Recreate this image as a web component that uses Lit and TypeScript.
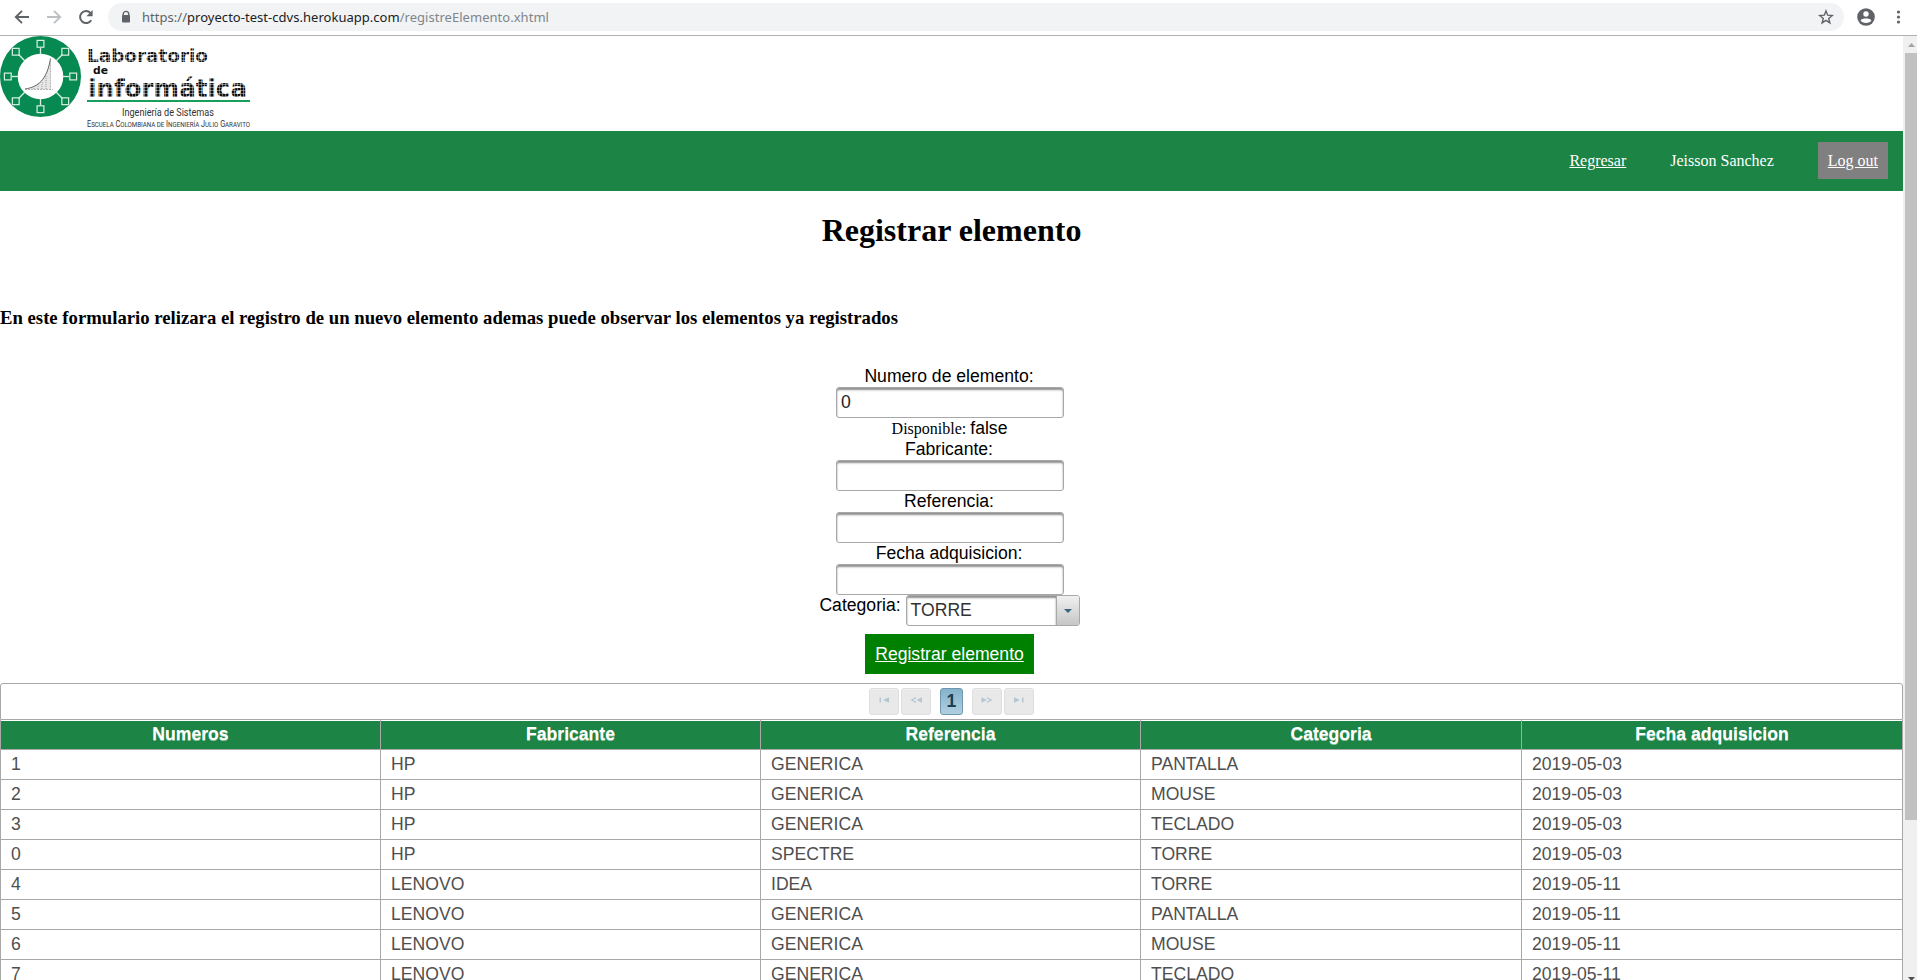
import { LitElement, html, css, svg } from "lit";
import { customElement, state } from "lit/decorators.js";

const COLUMNS = ["Numeros", "Fabricante", "Referencia", "Categoria", "Fecha adquisicion"];

const ROWS: string[][] = [
  ["1", "HP", "GENERICA", "PANTALLA", "2019-05-03"],
  ["2", "HP", "GENERICA", "MOUSE", "2019-05-03"],
  ["3", "HP", "GENERICA", "TECLADO", "2019-05-03"],
  ["0", "HP", "SPECTRE", "TORRE", "2019-05-03"],
  ["4", "LENOVO", "IDEA", "TORRE", "2019-05-11"],
  ["5", "LENOVO", "GENERICA", "PANTALLA", "2019-05-11"],
  ["6", "LENOVO", "GENERICA", "MOUSE", "2019-05-11"],
  ["7", "LENOVO", "GENERICA", "TECLADO", "2019-05-11"],
];

@customElement("browser-bar")
export class BrowserBar extends LitElement {
  static styles = css`
    :host { display: flex; align-items: center; height: 36px; box-sizing: border-box; padding-bottom: 2px;
      border-bottom: 1px solid #b0b0b0; background: #fff; flex: none; }
    svg { display: block; flex: none; }
    .nav { display: flex; align-items: center; gap: 14px; padding-left: 13px; width: 95px; }
    .field { display: flex; align-items: center; height: 28px; width: 1736px; margin-top: 1px; box-sizing: border-box;
      border-radius: 14px; background: #f1f3f4; padding: 0 10px 0 12px; }
    .url { flex: 1; display: flex; margin-left: 10px; font: 13px/18px "Noto Sans", sans-serif; letter-spacing: 0.03px; white-space: pre; }
    .scheme { color: #5f6368; }
    .host { color: #202124; }
    .path { color: #80868b; }
    .tools { display: flex; align-items: center; gap: 16px; margin-left: 12px; margin-top: 1px; }
  `;
  render() {
    return html`
      <div class="nav">
        <svg width="18" height="18" viewBox="0 0 18 18" fill="none" stroke="#5f6368" stroke-width="1.9"><path d="M16 9H3M9 2.8 2.8 9 9 15.2" /></svg>
        <svg width="18" height="18" viewBox="0 0 18 18" fill="none" stroke="#bdc0c3" stroke-width="1.9"><path d="M2 9h13M9 2.8 15.2 9 9 15.2" /></svg>
        <svg width="18" height="18" viewBox="0 0 18 18"><path d="M14.2 12.2A6 6 0 1 1 13.4 4.9" fill="none" stroke="#5f6368" stroke-width="2" /><path d="M15.6 2v6.2H9.4z" fill="#5f6368" /></svg>
      </div>
      <div class="field">
        <svg width="12" height="14" viewBox="0 0 12 14"><path d="M3.2 6V4.2a2.8 2.8 0 0 1 5.6 0V6" fill="none" stroke="#5f6368" stroke-width="1.4" /><rect x="2" y="5" width="8" height="7.5" rx="1" fill="#5f6368" /></svg>
        <div class="url"><span class="scheme">https://</span><span class="host">proyecto-test-cdvs.herokuapp.com</span><span class="path">/registreElemento.xhtml</span></div>
        <svg width="16" height="16" viewBox="0 0 16 16"><path d="m8 1.9 1.7 4.3 4.6.3-3.6 2.9 1.2 4.5L8 11.4l-3.9 2.5 1.2-4.5L1.7 6.5l4.6-.3z" fill="none" stroke="#5f6368" stroke-width="1.4" /></svg>
      </div>
      <div class="tools">
        <svg width="20" height="20" viewBox="0 0 20 20"><circle cx="10" cy="10" r="8.8" fill="#5f6368" /><circle cx="10" cy="7" r="2.7" fill="#fff" /><path d="M4.6 13.300c1.400-2.300 9.400-2.300 10.800 0C14 16.800 6 16.800 4.600 13.300z" fill="#fff" /></svg>
        <svg width="12" height="16" viewBox="0 0 12 16" fill="#5f6368"><circle cx="6.5" cy="3" r="1.6" /><circle cx="6.5" cy="8" r="1.6" /><circle cx="6.5" cy="13" r="1.6" /></svg>
      </div>
    `;
  }
}

@customElement("lab-logo")
export class LabLogo extends LitElement {
  static styles = css`
    :host { display: block; height: 95px; flex: none; }
    svg { display: block; }
    .dots { font-family: "DejaVu Sans", sans-serif; font-weight: bold; fill: #111; }
    .sub { font-family: Roboto, sans-serif; fill: #333; }
  `;
  render() {
    const nodes = [0, 45, 90, 135, 180, 225, 270, 315].map((deg) => {
      const a = (deg * Math.PI) / 180;
      const d = deg % 90 ? 35 : 32.7;
      const x = 40.5 + Math.cos(a) * d;
      const y = 40.5 + Math.sin(a) * d;
      return svg`<path d=${`M${40.5 + Math.cos(a) * 22} ${40.5 + Math.sin(a) * 22}L${x - Math.cos(a) * 4} ${y - Math.sin(a) * 4}`}
          stroke="#d9efe3" stroke-width="1.300" />
        <rect x=${x - 3.4} y=${y - 3.4} width="6.800" height="6.800" fill="none" stroke="#d9efe3" stroke-width="1.200" />`;
    });
    return html`
      <svg width="252" height="95" viewBox="0 0 252 95">
        <defs>
          <pattern id="grid" width="3" height="3" patternUnits="userSpaceOnUse">
            <path d="M0 .3h3M.3 0v3" stroke="#fff" stroke-width=".5" />
          </pattern>
        </defs>
        <circle cx="40.500" cy="40.500" r="40.500" fill="#078a51" />
        <circle cx="40.500" cy="40.500" r="22.800" fill="#fff" />
        ${nodes}
        <path d="M25 53.500C38 51 47 44 50.500 22.500V53.500z" fill="#e6e6e6" />
        <path d="M25 53C38 51 47 44 50.500 22.500" fill="none" stroke="#555" stroke-width=".9" />
        <path d="M25 53.500H53M50.500 22.500V53.500" fill="none" stroke="#999" stroke-width=".7" stroke-dasharray="2 1" />
        <path d="M34 53v-2M38 53v-5M42 53v-8M46 53V39" stroke="#888" stroke-width=".8" stroke-dasharray="1 1" />
        <text class="dots" x="87" y="26" font-size="18" textLength="121" lengthAdjust="spacingAndGlyphs">Laboratorio</text>
        <text class="dots" x="93" y="38" font-size="10.500" textLength="15" lengthAdjust="spacingAndGlyphs">de</text>
        <text class="dots" x="88" y="61" font-size="25" textLength="159" lengthAdjust="spacingAndGlyphs">informática</text>
        <rect x="87" y="10" width="162" height="17" fill="url(#grid)" />
        <rect x="87" y="39" width="162" height="23" fill="url(#grid)" />
        <rect x="87" y="64" width="163" height="2" fill="#16a05c" />
        <text class="sub" x="122" y="79.500" font-size="11" textLength="92" lengthAdjust="spacingAndGlyphs">Ingeniería de Sistemas</text>
        <text class="sub" x="87" y="91" font-size="9.500" textLength="163" lengthAdjust="spacingAndGlyphs">E<tspan font-size="8">SCUELA</tspan> C<tspan font-size="8">OLOMBIANA DE</tspan> I<tspan font-size="8">NGENIERÍA</tspan> J<tspan font-size="8">ULIO</tspan> G<tspan font-size="8">ARAVITO</tspan></text>
      </svg>
    `;
  }
}

@customElement("element-form")
export class ElementForm extends LitElement {
  static styles = css`
    :host { display: flex; flex-direction: column; align-items: center; width: 1900px; flex: none;
      font: 17.6px/21px "Liberation Sans", Arial, sans-serif; color: #000; }
    .label { height: 21px; padding-right: 2px; white-space: nowrap; }
    .available { font: 16px/21px "Liberation Serif", serif; padding-right: 1px; }
    .value { font: 17.6px/20px "Liberation Sans", sans-serif; }
    .input { width: 228px; height: 31px; box-sizing: border-box; border: 1px solid #a8a8a8; border-radius: 3px; outline: none;
      background: #fff; box-shadow: inset 0 2px 2px #8f8f8f; color: #222; font: inherit; padding: 0 4px; margin: 0; display: block; }
    .row { display: flex; gap: 5px; padding-right: 1px; }
    .select { display: flex; width: 174px; height: 31px; box-sizing: border-box; border: 1px solid #a8a8a8; border-radius: 3px; overflow: hidden; }
    .chosen { flex: 1; padding: 4px 4px 3px; box-shadow: inset 0 2px 2px #8f8f8f; color: #333; }
    .trigger { width: 22px; border-left: 1px solid #a8a8a8; background: linear-gradient(#f0f0f0, #c6c6c6); display: grid; place-items: center; }
    .submit { margin-top: 8px; height: 40px; width: 169px; box-sizing: border-box; margin-right: 1px; padding: 10px 0 9px; text-align: center;
      background: #008000; color: #fff; text-decoration: underline; }
  `;
  @state() number = "0";
  render() {
    return html`
      <div class="label">Numero de elemento:</div>
      <input class="input" .value=${this.number} />
      <div class="label available">Disponible: <span class="value">false</span></div>
      ${["Fabricante:", "Referencia:", "Fecha adquisicion:"].map(
        (name) => html`<div class="label">${name}</div><input class="input" />`
      )}
      <div class="row">
        <div>Categoria:</div>
        <div class="select">
          <div class="chosen">TORRE</div>
          <div class="trigger"><svg width="8" height="4" viewBox="0 0 8 4"><path d="M0 0h8L4 4z" fill="#38667f" /></svg></div>
        </div>
      </div>
      <a class="submit">Registrar elemento</a>
    `;
  }
}

@customElement("element-table")
export class ElementTable extends LitElement {
  static styles = css`
    :host { display: block; width: 1903px; margin-top: 9px; font: 17.6px/20px "Liberation Sans", Arial, sans-serif; color: #4f4f4f; }
    .pager { display: flex; justify-content: center; height: 37px; box-sizing: border-box; border: 1px solid #a8a8a8;
      border-radius: 3px 3px 0 0; padding-top: 4px; gap: 2px; }
    .btn { width: 30px; height: 27px; box-sizing: border-box; border: 1px solid #dedede; border-radius: 3px; background: #e9e9e9;
      display: grid; place-items: center; box-shadow: inset 0 1px 0 #f0f0f0; }
    .btn svg { margin-bottom: 3px; }
    .page { width: 23px; height: 27px; box-sizing: border-box; margin: 0 7px; border: 1px solid #6f98b0; border-radius: 3px;
      background: linear-gradient(#85b2cb, #b0cfe0); color: #1c3f52; font-weight: bold; line-height: 24px; text-align: center; }
    .grid { display: grid; grid-template-columns: 381px 380px 380px 381px 381px; }
    .head, .cell { box-sizing: border-box; border-right: 1px solid #a8a8a8; border-bottom: 1px solid #a8a8a8; height: 30px; }
    .head { padding-top: 1px; text-align: center; }
    .fill { display: block; height: 28px; background: #1c8445; color: #fff; font-weight: bold; line-height: 26px; text-shadow: 0 1px 0 rgba(255, 255, 255, 0.5); }
    .cell { padding: 4px 10px; }
    .first { border-left: 1px solid #a8a8a8; }
  `;
  render() {
    const icon = (d: string) => html`<svg width="12" height="6" viewBox="0 0 12 6"><path d=${d} fill="#b3c6d1" /></svg>`;
    return html`
      <div class="pager">
        <span class="btn">${icon("M1.500.500H3v5H1.500zM11 .2v5.600L5 3z")}</span>
        <span class="btn">${icon("M6 0v1.500L2.800 3 6 4.500V6L.500 3zM12 .2v5.600L6.500 3z")}</span>
        <span class="page">1</span>
        <span class="btn">${icon("M6 0v1.500L9.200 3 6 4.500V6L11.500 3zM.500.200v5.600L6 3z")}</span>
        <span class="btn">${icon("M10.500.500H9v5h1.500zM1 .2v5.600L7 3z")}</span>
      </div>
      <div class="grid">
        ${COLUMNS.map((name, i) => html`<div class="head ${i ? "" : "first"}"><span class="fill">${name}</span></div>`)}
        ${ROWS.map((row) => row.map((text, i) => html`<div class="cell ${i ? "" : "first"}">${text}</div>`))}
      </div>
    `;
  }
}

@customElement("app-root")
export class AppRoot extends LitElement {
  static styles = css`
    :host { display: flex; flex-direction: column; height: 980px; overflow: hidden; background: #fff; color: #000;
      font: 16px "Liberation Serif", "Times New Roman", serif; }
    .view { flex: 1; display: flex; min-height: 0; }
    .page { width: 1903px; overflow: hidden; display: flex; flex-direction: column; }
    .banner { height: 60px; flex: none; display: flex; justify-content: flex-end; background: #1c8445; color: #fff; line-height: 18px;
      padding: 11px 15px 0 0; box-sizing: border-box; }
    .link { text-decoration: underline; }
    .item { padding: 10px 0 9px; margin-right: 44px; height: 18px; }
    .logout { background: #808080; padding: 10px 10px 9px; height: 18px; text-decoration: underline; }
    .title { margin: 21px 0 0; font-size: 32px; line-height: 37px; text-align: center; flex: none; }
    .intro { margin: 58px 0 37px; font-size: 18.72px; line-height: 22px; flex: none; }
    .scroll { width: 14px; background: #f0f0f0; display: flex; flex-direction: column; align-items: center; }
    .arrow { height: 17px; width: 14px; flex: none; }
    .thumb { height: 767px; width: 12px; align-self: flex-end; background: #c1c1c1; flex: none; }
    .track { flex: 1; }
    .scroll svg { display: block; }
  `;
  render() {
    return html`
      <browser-bar></browser-bar>
      <div class="view">
        <main class="page">
          <lab-logo></lab-logo>
          <nav class="banner">
            <span class="item link">Regresar</span>
            <span class="item">Jeisson Sanchez</span>
            <span class="logout">Log out</span>
          </nav>
          <h1 class="title">Registrar elemento</h1>
          <h3 class="intro">En este formulario relizara el registro de un nuevo elemento ademas puede observar los elementos ya registrados</h3>
          <element-form></element-form>
          <element-table></element-table>
        </main>
        <div class="scroll">
          <div class="arrow"><svg width="14" height="17" viewBox="0 0 14 17"><path d="M5 11h7L8.500 7z" fill="#a3a3a3" /></svg></div>
          <div class="thumb"></div>
          <div class="track"></div>
          <div class="arrow"><svg width="14" height="17" viewBox="0 0 14 17"><path d="M5 14h7l-3.500 4z" fill="#505050" /></svg></div>
        </div>
      </div>
    `;
  }
}
